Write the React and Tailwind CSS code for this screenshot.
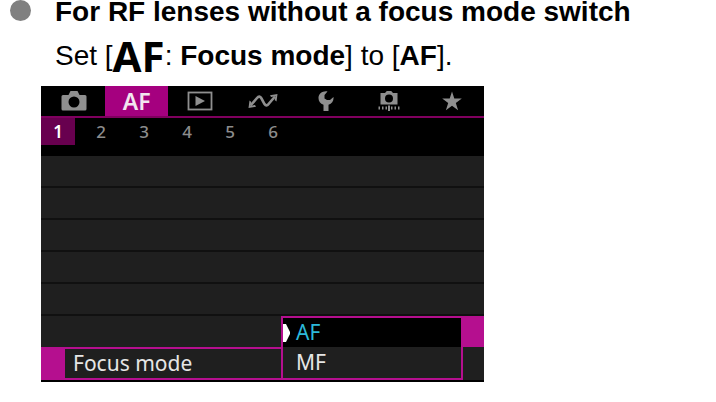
const ICON = "h-5 w-auto fill-[#8f8f8f]";

function CameraIcon() {
  return (
    <svg viewBox="0 0 26 20" className={ICON} aria-hidden="true">
      <path
        fillRule="evenodd"
        d="M2 4h5.500l2-4h7l2 4H24a1.500 1.500 0 0 1 1.500 1.500V18a1.500 1.500 0 0 1-1.500 1.500H2A1.500 1.500 0 0 1 .5 18V5.500A1.500 1.500 0 0 1 2 4Zm11 1.500a5.500 5.500 0 1 0 0 11 5.500 5.500 0 0 0 0-11Z"
      />
    </svg>
  );
}

function PlaybackIcon() {
  return (
    <svg viewBox="0 0 26 20" className={ICON} aria-hidden="true">
      <rect x="1.500" y="1.500" width="23" height="17" fill="none" stroke="#8f8f8f" strokeWidth="1.800" />
      <path d="M8.500 5v10l9.500-5Z" />
    </svg>
  );
}

function WirelessIcon() {
  return (
    <svg viewBox="0 0 30 20" className={ICON} aria-hidden="true">
      <path
        d="M2.500 14.500 9 7Q11.500 4 13.500 7.500L16.500 13Q18.500 16 21 12.500L27 5.500"
        fill="none"
        stroke="#8f8f8f"
        strokeWidth="2.600"
      />
      <path d="m.5 17 1-7.500 1.800 1.500-.8 3.800 4.500-.8 1 1.800ZM29.500 3l-1 7.500-1.800-1.500.8-3.800-4.500.8-1-1.800Z" />
    </svg>
  );
}

function WrenchIcon() {
  return (
    <svg viewBox="0 0 16 20" className={ICON} aria-hidden="true">
      <path d="M9.500.5 6.500 4v3.500L9 9h3l3.500-3c.4 3.800-1.500 6.700-5 7.800V20h-5v-6.200C2.200 12.600.3 10 .5 6.500.8 2.800 4.500-.3 9.500.5Z" />
    </svg>
  );
}

function CustomIcon() {
  return (
    <svg viewBox="0 0 24 20" className={ICON} aria-hidden="true">
      <path
        fillRule="evenodd"
        d="M3.500 2H8l1.800-2h4.400L16 2h4.500v11.500h-17Zm8.500 1.500a4 4 0 1 0 0 8 4 4 0 0 0 0-8Z"
      />
      <path d="M1.500 15.500h1.500v3H1.500ZM5 15.500h1.500v3H5ZM11 14.500h2V20h-2ZM17.500 15.500H19v3h-1.500ZM21 15.500h1.500v3H21ZM8.500 15.500H10v3H8.500ZM14 15.500h1.500v3H14Z" />
    </svg>
  );
}

function StarIcon() {
  return (
    <svg viewBox="0 0 20 20" className={ICON} aria-hidden="true">
      <path d="m10 .5 2.300 7.100h7.500l-6 4.400 2.300 7.200L10 14.800l-6.100 4.400L6.200 12l-6-4.400h7.500Z" />
    </svg>
  );
}

const tabs = [
  { id: "shoot", label: "Shooting", icon: <CameraIcon /> },
  { id: "af", label: "AF" },
  { id: "play", label: "Playback", icon: <PlaybackIcon /> },
  { id: "wireless", label: "Wireless", icon: <WirelessIcon /> },
  { id: "setup", label: "Set-up", icon: <WrenchIcon /> },
  { id: "custom", label: "Custom functions", icon: <CustomIcon /> },
  { id: "my", label: "My menu", icon: <StarIcon /> },
];

const pages = [1, 2, 3, 4, 5, 6];
const emptyRows = [1, 2, 3, 4, 5];

function CameraMenu() {
  return (
    <section className="w-full max-w-[443px] bg-black pb-0.5 font-['Noto_Sans',sans-serif]">
      <nav className="flex h-8 border-b-2 border-[#80005f] pl-px">
        {tabs.map((tab) => (
          <button
            key={tab.id}
            type="button"
            aria-label={tab.label}
            className={`flex flex-1 items-center justify-center ${tab.id === "af" ? "bg-[#a5007f]" : ""}`}
          >
            {tab.icon || <span className="text-[23px] leading-none font-semibold text-[#f2e6ef]">AF</span>}
          </button>
        ))}
      </nav>

      <div className="flex gap-[9px] pb-[11px]">
        {pages.map((page) => (
          <button
            key={page}
            type="button"
            className={`h-[27px] w-[34px] text-[17px] leading-none ${
              page === 1 ? "bg-[#68004f] font-semibold text-white" : "font-medium text-[#8c8c8c]"
            }`}
          >
            {page}
          </button>
        ))}
      </div>

      {emptyRows.map((row) => (
        <div key={row} className="h-8 border-b-2 border-[#101010] bg-[#1f1f1f]" />
      ))}

      <div className="flex text-[21px] leading-none text-[#e6e6e6]">
        <div className="flex-1">
          <div className="h-[31px] bg-[#1f1f1f]" />
          <div className="flex h-[33px] border-y-2 border-[#b50f8f] bg-[#1f1f1f]">
            <div className="w-6 bg-[#b50f8f]" />
            <div id="focus-mode" className="flex items-center pl-2">Focus mode</div>
          </div>
        </div>

        <div
          role="listbox"
          aria-labelledby="focus-mode"
          className="w-[182px] border-2 border-[#b50f8f] bg-[#1f1f1f]"
        >
          <button
            type="button"
            role="option"
            aria-selected="true"
            className="flex h-[29px] w-full items-center gap-1.5 bg-black text-[#2cb9da]"
          >
            <svg viewBox="0 0 7 18" className="h-[18px] w-[7px] fill-white" aria-hidden="true">
              <path d="M0 0H3L7 8v2l-4 8H0Z" />
            </svg>
            AF
          </button>
          <button
            type="button"
            role="option"
            aria-selected="false"
            className="flex h-[31px] w-full items-center pl-[13px]"
          >
            MF
          </button>
        </div>

        <div className="w-[21px] bg-[#1f1f1f]">
          <div className="h-[31px] bg-[#b50f8f]" />
        </div>
      </div>
    </section>
  );
}

export default function App() {
  return (
    <main className="min-h-screen bg-white font-['Liberation_Sans',Arial,sans-serif] text-[28px] text-black">
      <div className="flex items-start gap-6 pl-[10px]">
        <span className="size-[21px] shrink-0 rounded-full bg-[#808080]" />
        <h1 className="leading-6 font-bold">For RF lenses without a focus mode switch</h1>
      </div>
      <p className="mt-[11px] flex items-center pl-[55px] leading-none">
        <span>Set [</span>
        <span className="font-['Open_Sans',sans-serif] text-[42px] leading-none font-bold">AF</span>
        <span>
          : <b>Focus mode</b>] to [<b>AF</b>].
        </span>
      </p>
      <div className="mt-[9px] pr-4 pl-[41px]">
        <CameraMenu />
      </div>
    </main>
  );
}
